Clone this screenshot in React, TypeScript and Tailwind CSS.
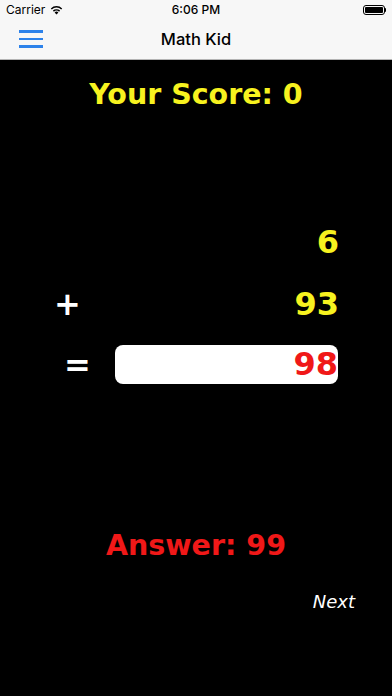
import React from 'react';

const App: React.FC = () => {
  return (
    <div className="w-[392px] h-[696px] bg-black flex flex-col overflow-hidden">
      {/* Header */}
      <div className="h-[60px] bg-[#f7f7f7] border-b border-[#b4b4b4] flex flex-col font-['Inter',sans-serif] text-black">
        {/* Status bar */}
        <div className="h-[20px] flex items-center justify-between px-[6px] text-[12px] relative">
          <div className="flex items-center gap-[5px]">
            <span>Carrier</span>
            <svg width="13" height="10" viewBox="0 0 13 10">
              <path d="M6.5 9.6 L4.6 7.4 A2.9 2.9 0 0 1 8.4 7.4 Z" fill="#000" />
              <path d="M2.9 5.6 A5.3 5.3 0 0 1 10.1 5.6 L9.1 6.7 A3.9 3.9 0 0 0 3.9 6.7 Z" fill="#000" />
              <path d="M0.8 3.4 A8.2 8.2 0 0 1 12.2 3.4 L11.2 4.5 A6.7 6.7 0 0 0 1.8 4.5 Z" fill="#000" />
            </svg>
          </div>
          <span className="absolute left-0 right-0 text-center font-medium">6:06 PM</span>
          <div className="flex items-center">
            <div className="w-[22px] h-[10px] border border-black rounded-[3px] p-[1px]">
              <div className="w-full h-full bg-black rounded-[1px]" />
            </div>
            <div className="w-[1.5px] h-[4px] bg-black rounded-r-sm" />
          </div>
        </div>
        {/* Nav bar */}
        <div className="flex-1 relative flex items-center justify-center">
          <div className="absolute left-[19px] top-[10px] flex flex-col gap-[5px]">
            <div className="w-[24px] h-[2.5px] bg-[#2d82ea]" />
            <div className="w-[24px] h-[2.5px] bg-[#2d82ea]" />
            <div className="w-[24px] h-[2.5px] bg-[#2d82ea]" />
          </div>
          <span className="text-[16.5px] font-medium">Math Kid</span>
        </div>
      </div>

      {/* Game */}
      <div className="flex flex-col font-['DejaVu_Sans',sans-serif] font-bold">
        <div className="mt-[18px] text-center text-[28.5px] leading-[34px] text-[#f7f21f]">Your Score: 0</div>

        <div className="mt-[110px] h-[40px] flex items-center justify-end pr-[53px] text-[32px] leading-[40px] text-[#f7f21f]">
          6
        </div>

        <div className="mt-[22px] h-[40px] flex items-center justify-between pl-[54px] pr-[53px] text-[32px] leading-[40px]">
          <span className="text-white">+</span>
          <span className="text-[#f7f21f]">93</span>
        </div>

        <div className="mt-[21px] h-[39px] flex items-center pl-[64px] pr-[54px] text-[32px]">
          <span className="text-white w-[51px]">=</span>
          <div className="flex-1 h-[39px] bg-white rounded-[8px] flex items-center justify-end text-[#f01818] leading-[39px]">
            98
          </div>
        </div>

        <div className="mt-[145px] text-center text-[28.5px] leading-[34px] text-[#f01818]">Answer: 99</div>

        <div className="mt-[28px] flex justify-end pr-[37px] text-[18px] leading-[22px] text-white font-normal italic">
          Next
        </div>
      </div>
    </div>
  );
};

export default App;
